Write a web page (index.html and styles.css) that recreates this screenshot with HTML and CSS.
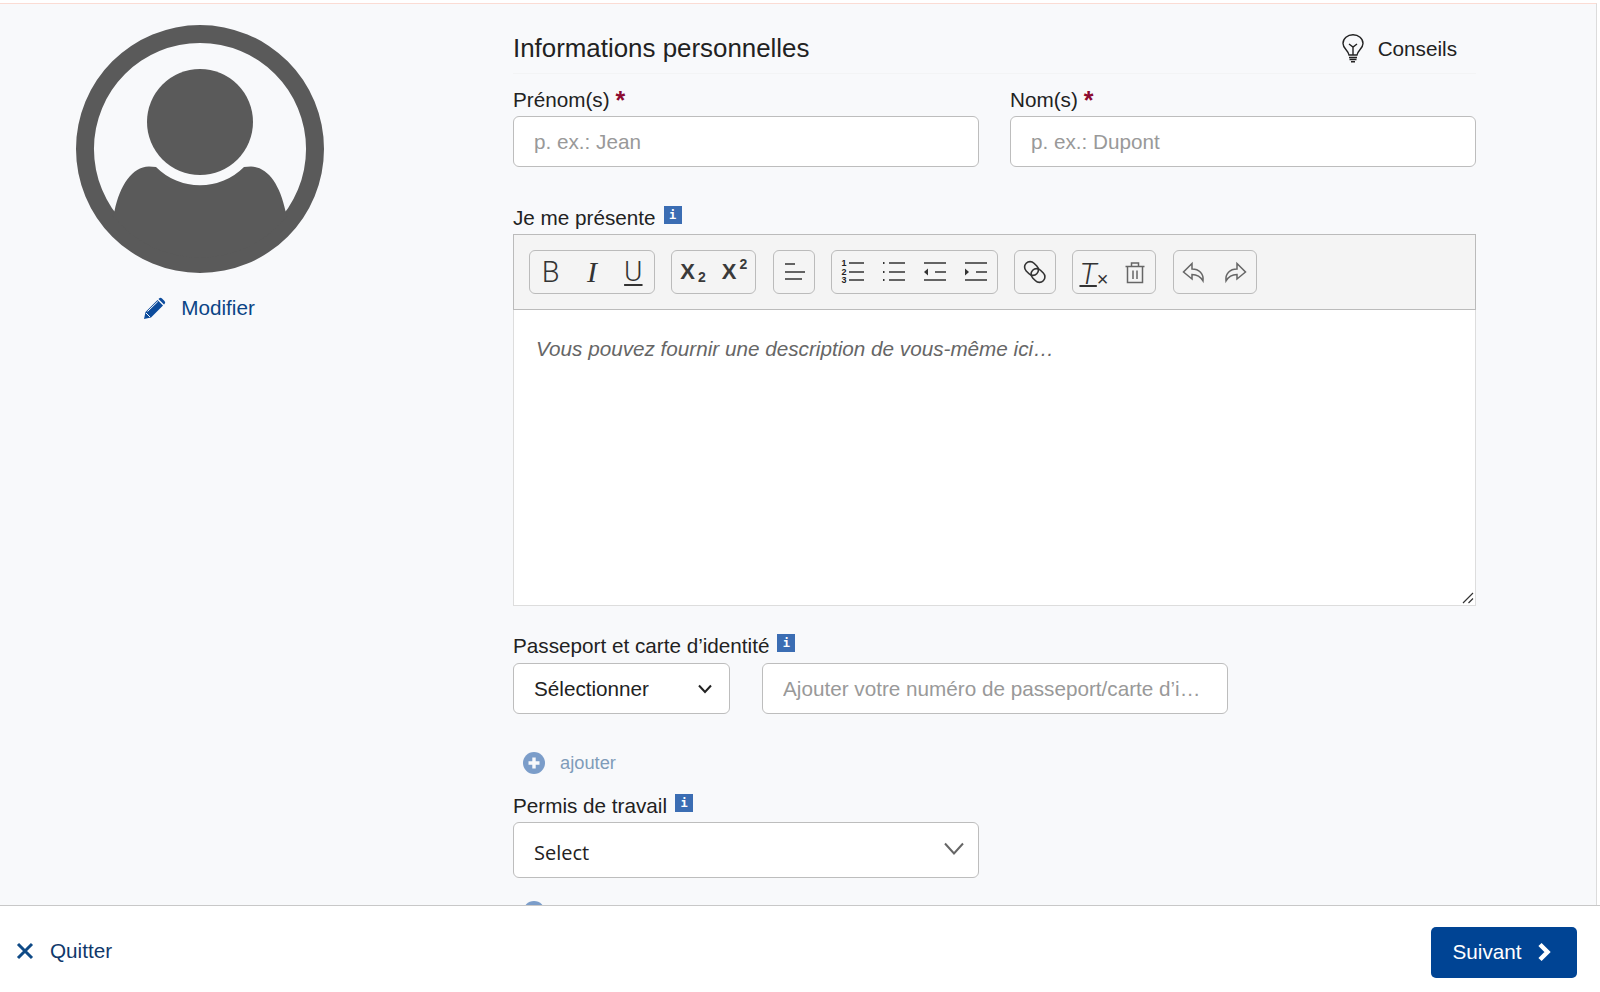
FILE: index.html
```html
<!DOCTYPE html>
<html lang="fr">
<head>
<meta charset="utf-8">
<title>Informations personnelles</title>
<link rel="stylesheet" href="styles.css">
</head>
<body>
<div class="app">
  <main class="main">
    <aside class="aside">
      <svg class="avatar" viewBox="0 0 248 248" width="248" height="248">
        <path fill="#5a5a5a" fill-rule="evenodd" d="M124 0a124 124 0 1 0 0 248a124 124 0 1 0 0-248ZM124 18a106 106 0 1 1 0 212a106 106 0 1 1 0-212Z"/>
        <circle cx="124" cy="97" r="53" fill="#5a5a5a"/>
        <path fill="#5a5a5a" d="M38.500 186C44 160 56 142 73 141.500L80 142A62 62 0 0 0 168 142L175 141.500C192 142 204 160 209.500 186L212 190A112 112 0 0 1 36 190Z"/>
      </svg>
      <a class="modify">
        <svg class="pencil" viewBox="0 0 22 22" width="22" height="22">
          <path fill="#0d4c9c" d="M0 22L1.500 15L13.500 3L19 8.500L7 20.500ZM15 1.500Q16.500 0 18 1.500L20.500 4Q22 5.500 20.500 7L20 7.500L14.500 2Z"/>
          <path fill="none" stroke="#f8f9fb" stroke-width="1" d="M3.500 14.500L13.800 4.500M2 16L6 20"/>
        </svg>
        <span>Modifier</span>
      </a>
    </aside>

    <section class="form">
      <header class="form-head">
        <h1 class="title">Informations personnelles</h1>
        <a class="tips">
          <svg class="bulb" viewBox="0 0 22 29" width="22" height="29" fill="none" stroke="#222" stroke-width="1.400">
            <path d="M7 21C6.500 16.500 1 14.500 1 9.500a10 8.800 0 0 1 20 0C21 14.500 15.500 16.500 15 21Z"/>
            <path d="M7 10L11 13L15 10M11 13V21M7 23.500H15M7.500 25.500H14.500M9 27.800H13"/>
          </svg>
          <span>Conseils</span>
        </a>
      </header>

      <div class="two-cols">
        <div class="field">
          <label class="label">Prénom(s)<span class="req">*</span></label>
          <input class="input" type="text" placeholder="p. ex.: Jean">
        </div>
        <div class="field">
          <label class="label">Nom(s)<span class="req">*</span></label>
          <input class="input" type="text" placeholder="p. ex.: Dupont">
        </div>
      </div>

      <label class="label label-about">Je me présente<span class="info">i</span></label>
      <div class="toolbar">
        <div class="group g3">
          <span class="btn glyph-b">B</span>
          <span class="btn glyph-i">I</span>
          <span class="btn glyph-u">U</span>
        </div>
        <div class="group g2x">
          <span class="btn glyph-x"><span>X<sub>2</sub></span></span>
          <span class="btn glyph-x"><span>X<sup>2</sup></span></span>
        </div>
        <div class="group g1">
          <span class="btn"><svg class="ico" viewBox="0 0 24 24"><path d="M3 4H13M3 12H23M3 19H20"/></svg></span>
        </div>
        <div class="group g4">
          <span class="btn"><svg class="ico ico-tall" viewBox="0 -3 24 30"><path d="M8 3H23M8 12H23M8 20H23"/><text class="nums" x="0.500" y="6">1</text><text class="nums" x="0.500" y="14.500">2</text><text class="nums" x="0.500" y="23">3</text></svg></span>
          <span class="btn"><svg class="ico" viewBox="0 0 24 24"><path d="M7 3H23M7 12H23M7 20H23"/><path class="dots" d="M1 3H2.500M1 12H2.500M1 20H2.500"/></svg></span>
          <span class="btn"><svg class="ico" viewBox="0 0 24 24"><path d="M1 3H23M12 12H23M1 20H23"/><path class="solid" d="M5 8.500V15.500L1 12Z"/></svg></span>
          <span class="btn"><svg class="ico" viewBox="0 0 24 24"><path d="M1 3H23M12 12H23M1 20H23"/><path class="solid" d="M1 8.500V15.500L5 12Z"/></svg></span>
        </div>
        <div class="group g1">
          <span class="btn"><svg class="ico" viewBox="0 0 24 24"><rect x="1" y="3" width="15" height="11" rx="5.500" transform="rotate(45 8.500 8.500)"/><rect x="7.500" y="10" width="15" height="11" rx="5.500" transform="rotate(45 15 15.500)"/></svg></span>
        </div>
        <div class="group g2">
          <span class="btn glyph-t"><span>T</span><small>×</small></span>
          <span class="btn"><svg class="ico ico-grey" viewBox="0 0 24 24"><path d="M2.500 6.500H21.500M8.500 6V3H15.500V6M4.500 6.500V22.500H19.500V6.500ZM10 10.500V19M14 10.500V19"/></svg></span>
        </div>
        <div class="group g2">
          <span class="btn"><svg class="ico ico-grey" viewBox="0 0 24 24"><path d="M10 3.500L1.500 12L10 19V14.500C15 14.500 18.500 16.500 21 21C22 13.500 17 9 10 9Z"/></svg></span>
          <span class="btn"><svg class="ico ico-grey" viewBox="0 0 24 24"><path d="M14 3.500L22.500 12L14 19V14.500C9 14.500 5.500 16.500 3 21C2 13.500 7 9 14 9Z"/></svg></span>
        </div>
      </div>
      <div class="editor">
        <p class="editor-placeholder">Vous pouvez fournir une description de vous-même ici…</p>
        <svg class="grip" viewBox="0 0 12 12" width="12" height="12"><path d="M1 11L11 1M6.500 11L11 6.500"/></svg>
      </div>

      <label class="label label-id">Passeport et carte d’identité<span class="info">i</span></label>
      <div class="id-row">
        <div class="select select-small">
          <span>Sélectionner</span>
          <svg viewBox="0 0 14 10" width="14" height="10"><path class="chev-dark" d="M1 1.500L7 8L13 1.500"/></svg>
        </div>
        <input class="input input-id" type="text" placeholder="Ajouter votre numéro de passeport/carte d’identité">
      </div>

      <a class="add add-first">
        <svg viewBox="0 0 22 22" width="22" height="22"><circle cx="11" cy="11" r="11" fill="#7b9dc9"/><path d="M11 5.500V16.500M5.500 11H16.500" stroke="#f8f9fb" stroke-width="3.400"/></svg>
        <span>ajouter</span>
      </a>

      <label class="label label-permit">Permis de travail<span class="info">i</span></label>
      <div class="select select-wide">
        <span class="select-value">Select</span>
        <svg viewBox="0 0 20 14" width="20" height="14"><path class="chev-grey" d="M1 1.500L10 11.500L19 1.500"/></svg>
      </div>

      <a class="add add-second">
        <svg viewBox="0 0 22 22" width="22" height="22"><circle cx="11" cy="11" r="11" fill="#7b9dc9"/><path d="M11 5.500V16.500M5.500 11H16.500" stroke="#f8f9fb" stroke-width="3.400"/></svg>
        <span>ajouter</span>
      </a>
    </section>
  </main>

  <footer class="footer">
    <a class="quit">
      <svg viewBox="0 0 18 18" width="18" height="18"><path d="M2 2L16 16M16 2L2 16"/></svg>
      <span>Quitter</span>
    </a>
    <button class="next" type="button">
      <span>Suivant</span>
      <svg viewBox="0 0 14 20" width="14" height="20"><path d="M3 2.500L10.500 10L3 17.500"/></svg>
    </button>
  </footer>
</div>
</body>
</html>
```

FILE: styles.css
```css
* { box-sizing: border-box; }
html, body { margin: 0; height: 100%; }
body {
  font-family: "Liberation Sans", Arial, sans-serif;
  font-size: 20.700px;
  color: #222;
  background: #fff;
  overflow: hidden;
}
.app {
  height: 992px;
  padding-top: 3px;
  display: flex;
  flex-direction: column;
}
.main {
  height: 902px;
  flex: none;
  overflow: hidden;
  width: 1597px;
  display: flex;
  background: #f8f9fb;
  border-top: 1px solid #fbdcd4;
  border-right: 1px solid #dcdcdc;
}
.aside {
  width: 399px;
  flex: none;
  margin-right: 114px;
  padding-top: 21px;
  display: flex;
  flex-direction: column;
  align-items: center;
}
.avatar { display: block; flex: none; }
.modify {
  margin-top: 24px;
  display: flex;
  align-items: center;
  gap: 15px;
  color: #0b4586;
  line-height: 22px;
}
.pencil { display: block; }

.form { width: 963px; flex: none; }
.form-head {
  height: 70px;
  padding-top: 27px;
  display: flex;
  justify-content: space-between;
  align-items: flex-start;
  border-bottom: 1px solid #f3f4f5;
}
.title {
  margin: 0;
  font-size: 25.900px;
  font-weight: 400;
  line-height: 34px;
  color: #222;
}
.tips {
  display: flex;
  align-items: center;
  gap: 14px;
  padding-right: 19px;
  margin-top: 3px;
  line-height: 29px;
  color: #222;
}
.bulb { display: block; }

.two-cols {
  margin-top: 14px;
  display: grid;
  grid-template-columns: 466px 466px;
  column-gap: 31px;
}
.field { display: flex; flex-direction: column; }
.label {
  display: flex;
  align-items: flex-start;
  height: 24px;
  line-height: 24px;
  margin-bottom: 4px;
  color: #222;
}
.req {
  margin-left: 6px;
  color: #8c0a30;
  font-size: 25px;
  font-weight: 700;
}
.info {
  width: 18px;
  height: 18px;
  margin-left: 8px;
  background: #3b6db3;
  color: #fff;
  font-family: "DejaVu Sans Mono", monospace;
  font-size: 12px;
  font-weight: 700;
  line-height: 18px;
  text-align: center;
}
.input {
  display: block;
  width: 100%;
  height: 51px;
  padding: 0 20px;
  border: 1px solid #bdbdbd;
  border-radius: 6px;
  background: #fff;
  font: inherit;
  color: #222;
  outline: 0;
  text-overflow: ellipsis;
}
.input::placeholder { color: #999; opacity: 1; }

.label-about { margin-top: 39px; margin-bottom: 4px; }
.toolbar {
  height: 76px;
  padding: 15px 0 0 15px;
  display: flex;
  align-items: flex-start;
  gap: 16.300px;
  background: #f4f4f4;
  border: 1px solid #bbb;
}
.group {
  height: 44px;
  display: flex;
  border: 1px solid #bbb;
  border-radius: 6px;
}
.g1 { width: 42px; }
.g2 { width: 84px; }
.g2x { width: 85px; }
.g3 { width: 126px; }
.g4 { width: 167px; }
.btn {
  flex: 1 1 0;
  display: flex;
  align-items: center;
  justify-content: center;
  min-width: 0;
  color: #333;
  line-height: 1;
}
.ico {
  width: 24px;
  height: 24px;
  display: block;
  flex: none;
  fill: none;
  stroke: #333;
  stroke-width: 1.600;
}
.ico-tall { height: 30px; }
.ico-grey { stroke: #666; stroke-width: 1.500; }
.ico .solid { fill: #333; stroke: none; }
.ico .dots { stroke-width: 1.800; }
.nums {
  font-family: "Liberation Sans", sans-serif;
  font-size: 9px;
  font-weight: 700;
  fill: #222;
  stroke: none;
}
.glyph-b {
  font-family: Roboto, "Liberation Sans", sans-serif;
  font-weight: 300;
  font-size: 29px;
}
.glyph-i {
  font-family: "Liberation Serif", serif;
  font-style: italic;
  font-size: 30px;
}
.glyph-u {
  font-family: Roboto, "Liberation Sans", sans-serif;
  font-weight: 300;
  font-size: 28px;
  text-decoration: underline;
  text-underline-offset: 3px;
  text-decoration-thickness: 1.500px;
}
.glyph-x { font-size: 22px; font-weight: 700; color: #3a3a3a; }
.glyph-x sub, .glyph-x sup {
  font-size: 14px;
  font-weight: 700;
  margin-left: 3px;
  line-height: 0;
}
.glyph-x sub { vertical-align: -3px; }
.glyph-x sup { vertical-align: 10px; }
.glyph-t {
  font-family: Roboto, "Liberation Sans", sans-serif;
  font-weight: 300;
  font-style: italic;
  font-size: 30px;
  align-items: flex-end;
  padding-bottom: 4px;
}
.glyph-t > span {
  text-decoration: underline;
  text-decoration-thickness: 1.500px;
  text-underline-offset: 1px;
}
.glyph-t small {
  font-family: "Liberation Sans", sans-serif;
  font-style: normal;
  font-weight: 400;
  font-size: 20px;
  line-height: 20px;
}

.editor {
  position: relative;
  height: 296px;
  background: #fff;
  border: 1px solid #ddd;
  border-top: 0;
  padding: 27px 22px;
}
.editor-placeholder {
  margin: 0;
  font-style: italic;
  line-height: 24px;
  color: #666;
}
.grip {
  position: absolute;
  right: 1px;
  bottom: 1px;
  fill: none;
  stroke: #333;
  stroke-width: 1.200;
}

.label-id { margin-top: 28px; margin-bottom: 5px; }
.id-row { display: flex; gap: 32px; }
.select {
  height: 51px;
  padding: 0 17px 0 20px;
  display: flex;
  align-items: center;
  justify-content: space-between;
  background: #fff;
  border: 1px solid #bdbdbd;
  border-radius: 6px;
  color: #222;
}
.select-small { width: 217px; flex: none; }
.input-id { width: 466px; flex: none; }
.chev-dark { fill: none; stroke: #222; stroke-width: 2; }
.chev-grey { fill: none; stroke: #666; stroke-width: 2; }

.add {
  display: flex;
  align-items: center;
  gap: 15px;
  height: 22px;
  margin-left: 10px;
  font-size: 18.300px;
  color: #7f9cb9;
}
.add svg { display: block; flex: none; }
.add-first { margin-top: 38px; }
.label-permit { margin-top: 20px; }
.select-wide {
  width: 466px;
  height: 56px;
  padding-right: 14px;
}
.select-wide svg { margin-top: -3px; }
.select-value {
  font-family: "Open Sans", sans-serif;
  font-size: 20px;
  margin-top: 5px;
}
.add-second { margin-top: 23px; }

.footer {
  flex: 1;
  display: flex;
  justify-content: space-between;
  align-items: center;
  padding: 21px 23px 14px 16px;
  background: #fff;
  border-top: 1px solid #c8c8c8;
}
.quit {
  display: flex;
  align-items: center;
  gap: 16px;
  color: #10386b;
  margin-top: -4px;
}
.quit svg { display: block; fill: none; stroke: #0f4a86; stroke-width: 3; }
.next {
  width: 146px;
  height: 51px;
  display: flex;
  align-items: center;
  justify-content: center;
  gap: 15px;
  background: #004494;
  border: 0;
  border-radius: 5px;
  color: #fff;
  font: inherit;
  padding: 0 5px 2px 0;
}
.next svg { display: block; fill: none; stroke: #fff; stroke-width: 4.500; }
```
